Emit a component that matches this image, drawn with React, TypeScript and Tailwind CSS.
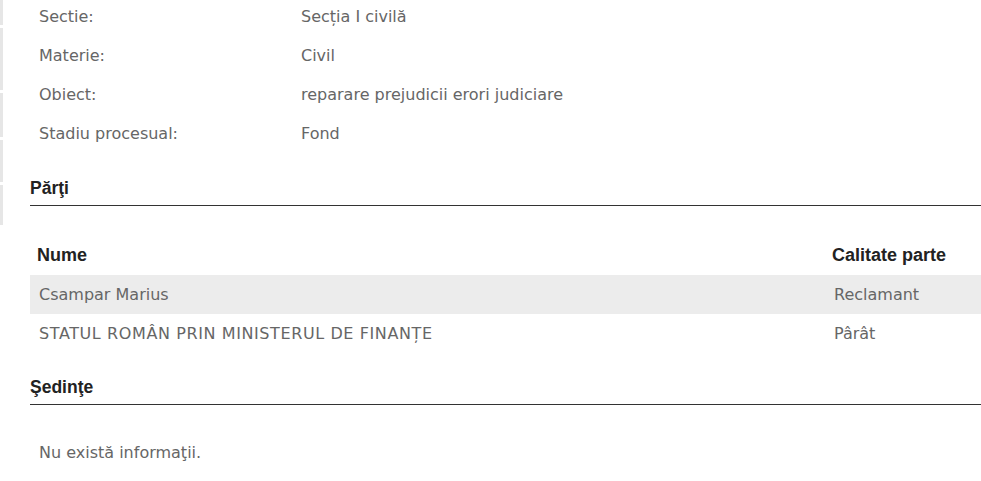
import React from "react";

const info = [
  ["Sectie:", "Secția I civilă"],
  ["Materie:", "Civil"],
  ["Obiect:", "reparare prejudicii erori judiciare"],
  ["Stadiu procesual:", "Fond"],
];

const parti = [
  ["Csampar Marius", "Reclamant"],
  ["STATUL ROMÂN PRIN MINISTERUL DE FINANȚE", "Pârât"],
];

const body = "font-['DejaVu_Sans',sans-serif] text-[16px] text-[#666]";
const head = "font-['Liberation_Sans',Arial,sans-serif] font-bold text-[#222]";

export default function App() {
  return (
    <div className="w-[981px] h-[481px] overflow-hidden bg-white flex">
      {/* left rail */}
      <div className="w-[3px] flex flex-col gap-[3px] h-[225px]">
        <div className="h-[25px] bg-[#e6e6e6]" />
        <div className="h-[62px] bg-[#e6e6e6]" />
        <div className="h-[44px] bg-[#e6e6e6]" />
        <div className="h-[42px] bg-[#e6e6e6]" />
        <div className="h-[40px] bg-[#e6e6e6]" />
      </div>

      <div className="flex-1 pl-[27px] -mt-[3px]">
        <div className={body}>
          {info.map(([k, v]) => (
            <div key={k} className="h-[39px] flex items-center pl-[9px]">
              <span className="w-[262px]">{k}</span>
              <span>{v}</span>
            </div>
          ))}
        </div>

        <div className="mt-[18px] border-b border-[#333] h-[35px] flex items-center">
          <span className={`${head} text-[17.5px]`}>Părţi</span>
        </div>

        <div className="mt-[30px]">
          <div className={`${head} text-[18px] h-[39px] flex items-center pl-[7px]`}>
            <span className="flex-1">Nume</span>
            <span className="w-[149px]">Calitate parte</span>
          </div>
          {parti.map(([n, c], i) => (
            <div
              key={n}
              className={`${body} h-[39px] flex items-center pl-[9px] ${i === 0 ? "bg-[#ececec]" : ""}`}
            >
              <span className={`flex-1 ${i === 1 ? "tracking-[0.6px]" : ""}`}>{n}</span>
              <span className="w-[147px]">{c}</span>
            </div>
          ))}
        </div>

        <div className="mt-[17px] border-b border-[#333] h-[35px] flex items-center">
          <span className={`${head} text-[17.5px]`}>Şedinţe</span>
        </div>

        <div className={`${body} mt-[28px] pl-[9px] h-[39px] flex items-center`}>
          Nu există informaţii.
        </div>
      </div>
    </div>
  );
}
